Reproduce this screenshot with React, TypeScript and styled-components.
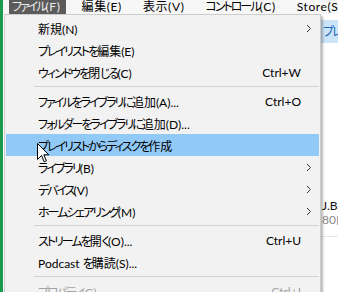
import { FC, Fragment } from 'react'
import styled, { createGlobalStyle } from 'styled-components'

const GlobalStyle = createGlobalStyle`
  html, body {
    margin: 0;
    padding: 0;
    background: #ffffff;
  }
  body {
    font-family: Lato, 'Noto Sans CJK JP', sans-serif;
    font-size: 12px;
    font-feature-settings: 'palt';
  }
`

const Window = styled.div`
  position: relative;
  width: 338px;
  height: 292px;
  overflow: hidden;
  display: flex;
  background: #ffffff;
`

const AccentStripe = styled.div`
  width: 3px;
  flex: none;
  background: #1b9a4b;
`

const Main = styled.div`
  flex: 1;
  display: flex;
  flex-direction: column;
  min-width: 0;
`

const MenuBar = styled.div`
  height: 14px;
  display: flex;
  align-items: center;
  padding-left: 6px;
  background: #f7f7f7;
  white-space: nowrap;
`

const BarItem = styled.div<{ $open?: boolean }>`
  height: 14px;
  line-height: 13px;
  padding: 0 5px 0 3px;
  margin-right: 13px;
  letter-spacing: 0.6px;
  color: ${(p) => (p.$open ? '#ececec' : '#000000')};
  background: ${(p) => (p.$open ? '#5b5b5b' : 'transparent')};
`

const Kana = styled.span`
  letter-spacing: -2px;
`

const Content = styled.div`
  flex: 1;
  display: flex;
  flex-direction: column;
  padding-left: 316px;
  white-space: nowrap;
`

const SelectedRow = styled.div`
  margin-top: 6px;
  height: 23px;
  line-height: 23px;
  padding-left: 4px;
  background: #cce4f7;
  color: #1a66c2;
`

const AlbumBlock = styled.div`
  margin-top: 156px;
  padding: 0 0 9px 3px;
  border-bottom: 1px solid #e6e6e6;
  display: flex;
  flex-direction: column;
`

const AlbumTitle = styled.span`
  line-height: 14px;
  color: #111111;
`

const AlbumSub = styled.span`
  line-height: 14px;
  color: #8a8a8a;
`

const Menu = styled.div`
  position: absolute;
  left: 4px;
  top: 14px;
  width: 317px;
  box-sizing: border-box;
  padding: 2px 1px;
  background: #f2f2f2;
  border: 1px solid #cccccc;
  box-shadow: 2px 2px 2px rgba(0, 0, 0, 0.28);
`

const Item = styled.div<{ $active?: boolean; $disabled?: boolean }>`
  height: 22px;
  display: grid;
  grid-template-columns: 1fr auto 18px;
  align-items: center;
  padding-left: 32px;
  white-space: nowrap;
  color: ${(p) => (p.$disabled ? '#a3a3a3' : '#000000')};
  background: ${(p) => (p.$active ? '#91c9f7' : 'transparent')};
`

const Shortcut = styled.span`
  text-align: right;
`

const ArrowCell = styled.span`
  display: flex;
  align-items: center;
  padding-left: 5px;
`

const Separator = styled.div`
  height: 7px;
  display: flex;
  align-items: center;
  padding-left: 28px;

  &::after {
    content: '';
    flex: 1;
    height: 1px;
    background: #d3d3d3;
  }
`

const Cursor = styled.svg`
  position: absolute;
  left: 37px;
  top: 143px;
`

// kana runs are set tighter, like the UI font's proportional kana
const Label: FC<{ text: string }> = ({ text }) => (
  <>
    {text.split(/([\u3040-\u30ff]+)/).map((part, i) =>
      /[\u3040-\u30ff]/.test(part) ? (
        <Kana key={i}>{part}</Kana>
      ) : (
        <Fragment key={i}>{part}</Fragment>
      )
    )}
  </>
)

const Chevron: FC = () => (
  <svg width='6' height='9' viewBox='0 0 6 9'>
    <path d='M1 1 L4.5 4.5 L1 8' fill='none' stroke='#333333' strokeWidth='1' />
  </svg>
)

type Entry =
  | { kind: 'sep' }
  | {
      kind: 'item'
      label: string
      shortcut?: string
      sub?: boolean
      active?: boolean
      disabled?: boolean
    }

const entries: Entry[] = [
  { kind: 'item', label: '新規(N)', sub: true },
  { kind: 'item', label: 'プレイリストを編集(E)' },
  { kind: 'item', label: 'ウィンドウを閉じる(C)', shortcut: 'Ctrl+W' },
  { kind: 'sep' },
  { kind: 'item', label: 'ファイルをライブラリに追加(A)...', shortcut: 'Ctrl+O' },
  { kind: 'item', label: 'フォルダーをライブラリに追加(D)...' },
  { kind: 'item', label: 'プレイリストからディスクを作成', active: true },
  { kind: 'item', label: 'ライブラリ(B)', sub: true },
  { kind: 'item', label: 'デバイス(V)', sub: true },
  { kind: 'item', label: 'ホームシェアリング(M)', sub: true },
  { kind: 'sep' },
  { kind: 'item', label: 'ストリームを開く(O)...', shortcut: 'Ctrl+U' },
  { kind: 'item', label: 'Podcast を購読(S)...' },
  { kind: 'sep' },
  { kind: 'item', label: 'プロパティ(G)', shortcut: 'Ctrl+I', disabled: true }
]

const menus = ['ファイル(F)', '編集(E)', '表示(V)', 'コントロール(C)', 'Store(S)', 'ヘルプ(H)']

const App: FC = () => {
  return (
    <Window>
      <GlobalStyle />
      <AccentStripe />
      <Main>
        <MenuBar>
          {menus.map((m, i) => (
            <BarItem key={`bar-${m}`} $open={i === 0}>
              <Label text={m} />
            </BarItem>
          ))}
        </MenuBar>
        <Content>
          <SelectedRow>
            <Label text='プレイリスト' />
          </SelectedRow>
          <AlbumBlock>
            <AlbumTitle>J.Bach</AlbumTitle>
            <AlbumSub>80曲</AlbumSub>
          </AlbumBlock>
        </Content>
      </Main>

      <Menu>
        {entries.map((e, i) =>
          e.kind === 'sep' ? (
            <Separator key={`sep-${i}`} />
          ) : (
            <Item key={`item-${i}`} $active={e.active} $disabled={e.disabled}>
              <span>
                <Label text={e.label} />
              </span>
              <Shortcut>{e.shortcut}</Shortcut>
              <ArrowCell>{e.sub && <Chevron />}</ArrowCell>
            </Item>
          )
        )}
      </Menu>

      <Cursor width='13' height='20' viewBox='0 0 13 20'>
        <path
          d='M0.5 0.5 L0.5 16.5 L4.5 12.5 L7.2 18.8 L9.4 17.9 L6.8 11.8 L11.8 11.8 Z'
          fill='#ffffff'
          stroke='#000000'
          strokeWidth='1'
          strokeLinejoin='round'
        />
      </Cursor>
    </Window>
  )
}

export default App
